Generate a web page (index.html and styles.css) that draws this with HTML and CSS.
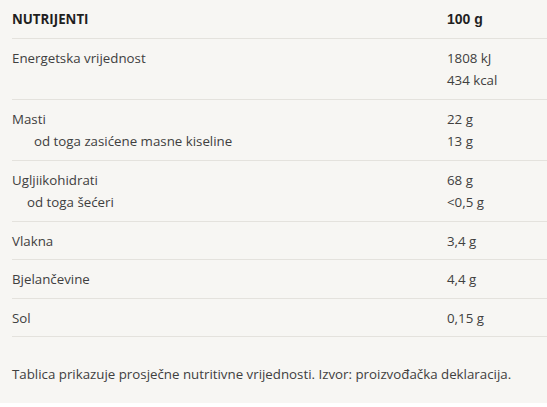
FILE: index.html
```html
<!DOCTYPE html>
<html lang="hr">
<head>
<meta charset="utf-8">
<link rel="stylesheet" href="styles.css">
</head>
<body>
<section class="panel">
  <table class="nutri">
    <thead>
      <tr><th class="name">NUTRIJENTI</th><th class="val">100 g</th></tr>
    </thead>
    <tbody>
      <tr><td class="name">Energetska vrijednost</td><td class="val">1808 kJ<br>434 kcal</td></tr>
      <tr><td class="name">Masti<br><span class="sub sub-a">od toga zasićene masne kiseline</span></td><td class="val">22 g<br>13 g</td></tr>
      <tr><td class="name">Ugljiikohidrati<br><span class="sub sub-b">od toga šećeri</span></td><td class="val">68 g<br>&lt;0,5 g</td></tr>
      <tr><td class="name">Vlakna</td><td class="val">3,4 g</td></tr>
      <tr><td class="name">Bjelančevine</td><td class="val">4,4 g</td></tr>
      <tr><td class="name">Sol</td><td class="val">0,15 g</td></tr>
    </tbody>
  </table>
  <p class="note">Tablica prikazuje prosječne nutritivne vrijednosti. Izvor: proizvođačka deklaracija.</p>
</section>
</body>
</html>
```
FILE: styles.css
```css
html, body {
  margin: 0;
  padding: 0;
  background: #ffffff;
}
.panel {
  background: #f7f6f3;
  height: 403px;
  padding-left: 12px;
  box-sizing: border-box;
  font-family: "Open Sans", "Noto Sans", sans-serif;
  font-size: 13.3px;
  color: #404040;
}
.nutri {
  width: 100%;
  border-collapse: collapse;
}
.nutri th, .nutri td {
  text-align: left;
  vertical-align: top;
  padding: 8px 0 7px 0;
  line-height: 22.5px;
  border-bottom: 1px solid #e4e2dd;
}
.nutri th {
  color: #1f1f1f;
  font-weight: 700;
}
.nutri th.val {
  font-family: "Liberation Sans", Arial, sans-serif;
  font-size: 14px;
}
.nutri .name {
  width: 435px;
}
.sub {
  display: inline-block;
}
.sub-a { padding-left: 22px; }
.sub-b { padding-left: 15px; }
.note {
  margin: 0;
  padding-top: 26px;
  line-height: 22px;
}
```
